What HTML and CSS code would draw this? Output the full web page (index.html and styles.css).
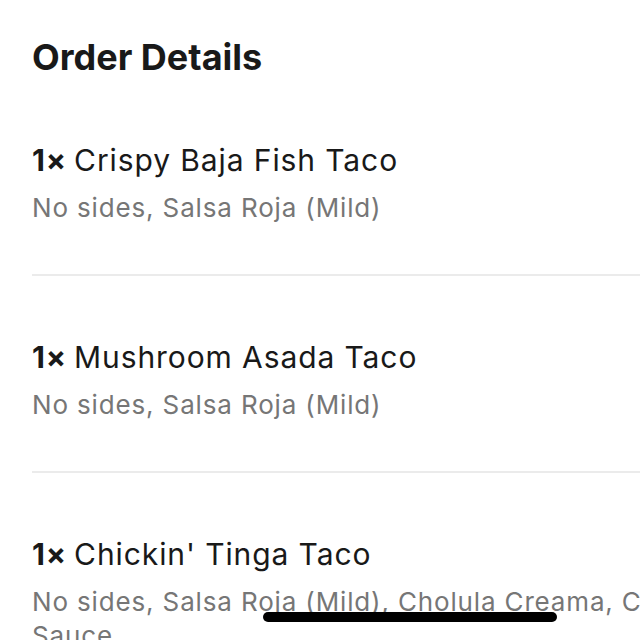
FILE: index.html
```
<!DOCTYPE html>
<html>
<head>
  <title>Order Details</title>
  <link rel="stylesheet" href="styles.css">
</head>
<body>
  <div class="page">
    <h1 class="title">Order Details</h1>

    <div class="item">
      <div class="item-name"><span class="qty">1×</span>Crispy Baja Fish Taco</div>
      <div class="item-opts">No sides, Salsa Roja (Mild)</div>
    </div>

    <div class="item">
      <div class="item-name"><span class="qty">1×</span>Mushroom Asada Taco</div>
      <div class="item-opts">No sides, Salsa Roja (Mild)</div>
    </div>

    <div class="item">
      <div class="item-name"><span class="qty">1×</span>Chickin' Tinga Taco</div>
      <div class="item-opts">No sides, Salsa Roja (Mild), Cholula Creama, Chipotle Sauce</div>
    </div>
  </div>

  <div class="home-bar"></div>
</body>
</html>
```

FILE: styles.css
```
html, body {
  margin: 0;
  padding: 0;
  height: 100%;
  overflow: hidden;
  background: #fff;
}

body {
  font-family: Inter, "Noto Sans", sans-serif;
  color: #191919;
}

.page {
  width: 740px;
  padding-left: 32px;
}

.title {
  margin: 0;
  padding-top: 35px;
  font-size: 36px;
  font-weight: 700;
  line-height: 44px;
}

.item {
  padding: 62px 0 49px;
  border-bottom: 2px solid #ebebeb;
}

.item-name {
  font-size: 30px;
  line-height: 38px;
  letter-spacing: 0.9px;
}

.qty {
  font-weight: 700;
  margin-right: 7px;
}

.item-opts {
  margin-top: 12px;
  font-size: 26px;
  line-height: 34px;
  letter-spacing: 0.85px;
  color: #767676;
}

.home-bar {
  position: absolute;
  left: 263px;
  bottom: 18px;
  width: 294px;
  height: 10px;
  border-radius: 5px;
  background: #000;
}
```
